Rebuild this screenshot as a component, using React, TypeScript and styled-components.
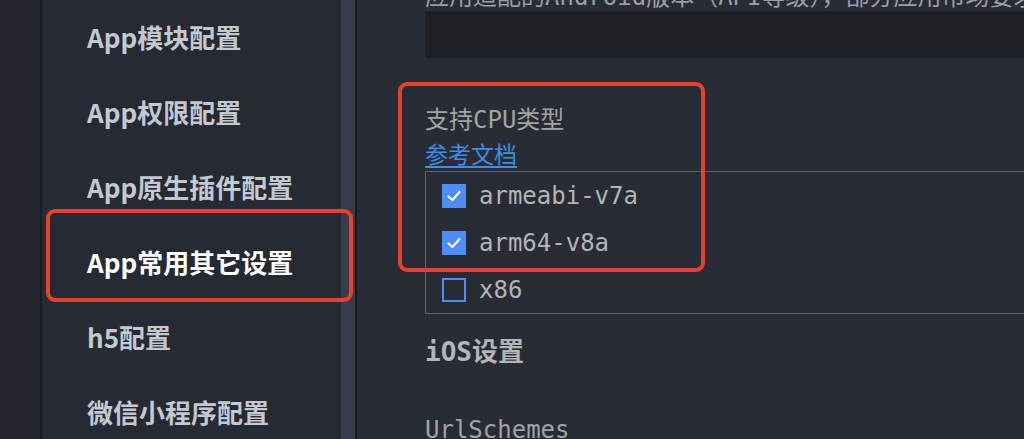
import React from "react";
import styled, { createGlobalStyle } from "styled-components";

const GlobalStyle = createGlobalStyle`
    html, body {
        margin: 0;
        padding: 0;
        height: 100%;
        overflow: hidden;
        background: #282c35;
    }
    #root {
        height: 100%;
    }
`;

const Page = styled.div`
    position: relative;
    display: flex;
    height: 439px;
    overflow: hidden;
`;

const LeftStrip = styled.div`
    width: 40px;
    flex-shrink: 0;
    background: #23262d;
    border-right: 2px solid #191b20;
`;

const Sidebar = styled.nav`
    width: 254px;
    flex-shrink: 0;
    padding-left: 45px;
    background: #262a33;
    display: flex;
    flex-direction: column;
    font-family: "Noto Sans CJK SC", "Noto Sans", sans-serif;
`;

interface IMenuItem {
    active?: boolean;
}

const MenuItem = styled.div<IMenuItem>`
    flex-shrink: 0;
    height: 75px;
    display: flex;
    align-items: center;
    font-size: 26px;
    font-weight: 700;
    color: ${({ active }) => (active ? "#ffffff" : "#c3c8d1")};
    white-space: nowrap;

    &:first-child {
        margin-top: -1px;
    }
`;

const ScrollTrack = styled.div`
    width: 14px;
    flex-shrink: 0;
    background: #363c4a;
    border-right: 2px solid #17191d;
`;

const Content = styled.main`
    flex: 1;
    min-width: 0;
    padding-left: 68px;
    background: #282c35;
    display: flex;
    flex-direction: column;
    font-family: "DejaVu Sans Mono", "Noto Sans CJK SC", monospace;
    color: #a6a6a6;
    font-size: 24px;

    & > * {
        flex-shrink: 0;
    }
`;

const Description = styled.div`
    margin-top: -15px;
    height: 26px;
    line-height: 24px;
    white-space: nowrap;
    color: #9a9ea6;
`;

const CodeBox = styled.div`
    height: 47px;
    background: #1d1f24;
    margin-right: -10px;
`;

const FieldLabel = styled.div`
    margin-top: 45px;
    height: 34px;
    line-height: 34px;
    color: #a3a3a3;
    white-space: nowrap;
`;

const DocLink = styled.a`
    display: block;
    height: 32px;
    line-height: 32px;
    color: #3b8fe8;
    text-decoration: underline;
    text-underline-offset: 3px;
    font-family: "Noto Sans CJK SC", sans-serif;
    font-size: 23px;
`;

const CheckGroup = styled.div`
    margin-top: 2px;
    margin-right: -10px;
    border: 1px solid #596075;
    display: flex;
    flex-direction: column;
    padding-left: 16px;
`;

const CheckRow = styled.label`
    height: 47px;
    display: flex;
    align-items: center;
    gap: 13px;
    color: #b5b5b5;
    white-space: nowrap;
`;

interface IBox {
    checked?: boolean;
}

const Box = styled.span<IBox>`
    width: 24px;
    height: 24px;
    box-sizing: border-box;
    display: flex;
    align-items: center;
    justify-content: center;
    background: ${({ checked }) => (checked ? "#4c8df6" : "transparent")};
    border: 2px solid #4c8df6;
`;

const SectionTitle = styled.div`
    margin-top: 20px;
    height: 36px;
    line-height: 36px;
    font-size: 26px;
    font-weight: 700;
    color: #b5b5b5;
`;

const PlainLabel = styled.div`
    margin-top: 42px;
    height: 36px;
    line-height: 36px;
    color: #a3a3a3;
`;

interface IMark {
    top: number;
    left: number;
    w: number;
    h: number;
}

const Highlight = styled.div<IMark>`
    position: absolute;
    top: ${({ top }) => top}px;
    left: ${({ left }) => left}px;
    width: ${({ w }) => w}px;
    height: ${({ h }) => h}px;
    box-sizing: border-box;
    border: 4px solid #e5412d;
    border-radius: 9px;
    pointer-events: none;
`;

const Check = () => (
    <svg width="18" height="18" viewBox="0 0 18 18">
        <polyline
            points="3.5,9.5 7.5,13 14.5,5"
            fill="none"
            stroke="#ffffff"
            strokeWidth="2.2"
            strokeLinecap="round"
            strokeLinejoin="round"
        />
    </svg>
);

const menu = [
    "App模块配置",
    "App权限配置",
    "App原生插件配置",
    "App常用其它设置",
    "h5配置",
    "微信小程序配置",
];

const cpus = [
    { name: "armeabi-v7a", checked: true },
    { name: "arm64-v8a", checked: true },
    { name: "x86", checked: false },
];

const App: React.FC = () => {
    return (
        <>
            <GlobalStyle />
            <Page>
                <LeftStrip />
                <Sidebar>
                    {menu.map((m) => (
                        <MenuItem key={m} active={m === "App常用其它设置"}>
                            {m}
                        </MenuItem>
                    ))}
                </Sidebar>
                <ScrollTrack />
                <Content>
                    <Description>
                        应用适配的Android版本（API等级），部分应用市场要求设置较高的targetSdkVersion
                    </Description>
                    <CodeBox />
                    <FieldLabel>支持CPU类型</FieldLabel>
                    <DocLink>参考文档</DocLink>
                    <CheckGroup>
                        {cpus.map((c) => (
                            <CheckRow key={c.name}>
                                <Box checked={c.checked}>{c.checked && <Check />}</Box>
                                {c.name}
                            </CheckRow>
                        ))}
                    </CheckGroup>
                    <SectionTitle>iOS设置</SectionTitle>
                    <PlainLabel>UrlSchemes</PlainLabel>
                </Content>
                <Highlight top={209} left={46} w={307} h={93} />
                <Highlight top={82} left={398} w={307} h={190} />
            </Page>
        </>
    );
};

export default App;
